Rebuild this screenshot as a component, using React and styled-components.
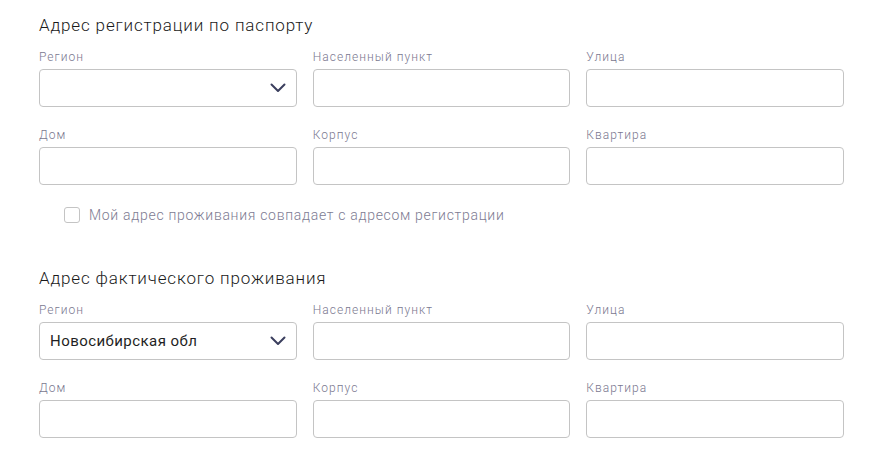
import React from 'react';
import styled, { createGlobalStyle } from 'styled-components';

const GlobalStyle = createGlobalStyle`
    body {
        margin: 0;
        background: #fff;
        font-family: Roboto, "Liberation Sans", sans-serif;
    }
`;

const fields = [
    { label: 'Регион', select: true },
    { label: 'Населенный пункт' },
    { label: 'Улица' },
    { label: 'Дом' },
    { label: 'Корпус' },
    { label: 'Квартира' },
];

const Chevron = () => (
    <svg width="16" height="10" viewBox="0 0 16 10" fill="none">
        <path d="M1.5 1.5L8 8L14.5 1.5" stroke="#3b3f5e" strokeWidth="2" strokeLinecap="round" strokeLinejoin="round" />
    </svg>
);

const AddressBlock = ({ title, region }) => {
    return (
        <Section>
            <Title>{title}</Title>
            <Grid>
                {fields.map((f) => (
                    <Field key={f.label}>
                        <Label>{f.label}</Label>
                        <InputBox>
                            {f.select && <Value>{region}</Value>}
                            {f.select && <Chevron />}
                        </InputBox>
                    </Field>
                ))}
            </Grid>
        </Section>
    );
};

const App = () => {
    return (
        <Page>
            <GlobalStyle />
            <AddressBlock title="Адрес регистрации по паспорту" region="" />
            <CheckRow>
                <Box />
                <CheckText>Мой адрес проживания совпадает с адресом регистрации</CheckText>
            </CheckRow>
            <AddressBlock title="Адрес фактического проживания" region="Новосибирская обл" />
        </Page>
    );
};

const Page = styled.div`
    padding: 15px 0 0 39px;
    width: 805px;
`;

const Section = styled.div`
    display: flex;
    flex-direction: column;
`;

const Title = styled.div`
    font-size: 17px;
    line-height: 20px;
    font-weight: 300;
    letter-spacing: 0.85px;
    color: #1a1a1a;
    margin-bottom: 15px;
`;

const Grid = styled.div`
    display: grid;
    grid-template-columns: repeat(3, 1fr);
    column-gap: 16px;
    row-gap: 21px;
`;

const Field = styled.div`
    display: flex;
    flex-direction: column;
`;

const Label = styled.div`
    font-size: 12px;
    line-height: 14px;
    font-weight: 300;
    letter-spacing: 1.05px;
    color: #7a788f;
    margin-bottom: 5px;
`;

const InputBox = styled.div`
    height: 38px;
    box-sizing: border-box;
    border: 1px solid #c4c4c4;
    border-radius: 4px;
    display: flex;
    align-items: center;
    justify-content: space-between;
    padding: 0 10px 0 10px;
`;

const Value = styled.span`
    font-size: 15px;
    letter-spacing: 0.45px;
    color: #1f1f24;
`;

const CheckRow = styled.label`
    display: flex;
    align-items: center;
    gap: 9px;
    margin: 22px 0 45px 25px;
`;

const Box = styled.span`
    width: 16px;
    height: 16px;
    box-sizing: border-box;
    border: 1px solid #c4c4c4;
    border-radius: 3px;
`;

const CheckText = styled.span`
    font-size: 14px;
    line-height: 16px;
    font-weight: 300;
    letter-spacing: 0.7px;
    color: #7d7b92;
`;

export default App;
